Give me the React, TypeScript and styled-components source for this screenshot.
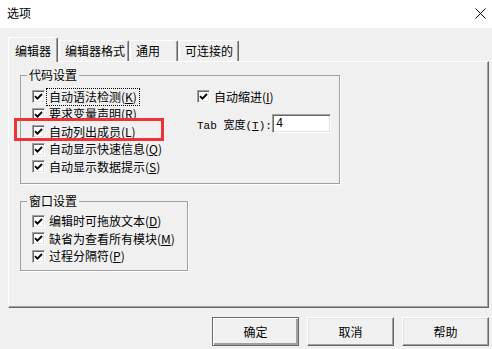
import React from "react";
import styled, { createGlobalStyle } from "styled-components";

const GlobalStyle = createGlobalStyle`
  html, body {
    margin: 0;
    padding: 0;
    background: #f0f0f0;
  }
  body {
    font-family: "Noto Sans CJK SC", "Liberation Sans", sans-serif;
    font-size: 12px;
    color: #000;
  }
`;

const Window = styled.div`
  position: relative;
  width: 492px;
  height: 349px;
  background: #f0f0f0;
  overflow: hidden;
`;

const TitleBar = styled.header`
  height: 28px;
  box-sizing: border-box;
  padding: 0 6px 2px 7px;
  background: #fff;
  display: flex;
  align-items: center;
  justify-content: space-between;
  font-size: 12px;
  line-height: 14px;
`;

const Body = styled.div`
  padding: 9px 3px 0 8px;
`;

const TabStrip = styled.div`
  display: flex;
  align-items: flex-end;
  height: 24px;
  position: relative;
  z-index: 1;
`;

const Tab = styled.div<{ $active?: boolean; $w: number }>`
  box-sizing: border-box;
  width: ${(p) => p.$w}px;
  height: ${(p) => (p.$active ? 25 : 21)}px;
  margin-bottom: ${(p) => (p.$active ? -1 : 0)}px;
  padding: ${(p) => (p.$active ? "2px 0 0 6px" : "0 0 0 5px")};
  display: flex;
  align-items: center;
  background: #f0f0f0;
  border-top: 1px solid #fff;
  border-left: 1px solid #fff;
  border-right: 1px solid #696969;
  box-shadow: inset -1px 0 0 #a0a0a0;
  border-radius: 2px 2px 0 0;
  line-height: 14px;
  white-space: nowrap;
  & + & {
    margin-left: ${(p) => (p.$w === 60 ? 1 : 0)}px;
  }
`;

const Panel = styled.section`
  box-sizing: border-box;
  width: 481px;
  height: 247px;
  padding: 13px 0 0 11px;
  border-top: 1px solid #fff;
  border-left: 1px solid #fff;
  border-right: 1px solid #696969;
  border-bottom: 1px solid #696969;
  box-shadow: inset -1px -1px 0 #a0a0a0;
`;

const GroupBox = styled.div<{ $w: number; $top: number; $pb: number }>`
  box-sizing: border-box;
  width: ${(p) => p.$w}px;
  margin-top: ${(p) => p.$top}px;
  padding: 0 0 ${(p) => p.$pb}px 11px;
  border: 1px solid #a0a0a0;
  box-shadow: 1px 1px 0 #fff;
`;

const Caption = styled.div<{ $gap: number }>`
  width: fit-content;
  height: 14px;
  margin: -8px 0 ${(p) => p.$gap}px -5px;
  padding: 0 2px;
  background: #f0f0f0;
  line-height: 14px;
`;

const Columns = styled.div`
  display: grid;
  grid-template-columns: 165px 1fr;
`;

const Stack = styled.div`
  display: flex;
  flex-direction: column;
`;

const Row = styled.div`
  height: 17.5px;
  display: flex;
  align-items: center;
`;

const Box = styled.span`
  box-sizing: border-box;
  width: 13px;
  height: 13px;
  flex: none;
  background: #fff;
  border: 1px solid;
  border-color: #a0a0a0 #fff #fff #a0a0a0;
  box-shadow: inset 1px 1px 0 #696969, inset -1px -1px 0 #e3e3e3;
  display: flex;
  align-items: center;
  justify-content: center;
`;

const Label = styled.span<{ $focus?: boolean }>`
  margin-left: 2px;
  padding: 1px 2px;
  line-height: 14px;
  white-space: nowrap;
  outline: ${(p) => (p.$focus ? "1px dotted #000" : "none")};
  outline-offset: 0;
`;

const TabRow = styled.div`
  margin-top: 8.5px;
  height: 19px;
  display: flex;
  align-items: center;
`;

const FieldLabel = styled.span`
  width: 75px;
  font-family: "Liberation Mono", "Noto Sans CJK SC", monospace;
  font-size: 11px;
  white-space: nowrap;
`;

const TextBox = styled.div`
  box-sizing: border-box;
  width: 59px;
  height: 19px;
  padding: 2px 0 0 3px;
  background: #fff;
  border: 1px solid;
  border-color: #a0a0a0 #fff #fff #a0a0a0;
  box-shadow: inset 1px 1px 0 #696969, inset -1px -1px 0 #e3e3e3;
  font-family: "Liberation Mono", monospace;
  font-size: 12px;
  line-height: 14px;
`;

const ButtonBar = styled.div`
  display: flex;
  justify-content: flex-end;
  gap: 8px;
  margin-top: 9px;
  padding-right: 0;
`;

const Button = styled.button<{ $default?: boolean }>`
  box-sizing: border-box;
  width: 87px;
  height: 29px;
  padding: 0;
  font-family: "Noto Sans CJK SC", sans-serif;
  font-size: 12px;
  color: #000;
  background: #f0f0f0;
  border: 1px solid;
  border-color: ${(p) =>
    p.$default ? "#696969" : "#fff #696969 #696969 #fff"};
  box-shadow: ${(p) =>
    p.$default
      ? "inset 1px 1px 0 #fff, inset -2px -2px 0 #a0a0a0"
      : "inset -1px -1px 0 #a0a0a0, inset 1px 1px 0 #e3e3e3"};
`;

const Highlight = styled.div`
  position: absolute;
  left: 14px;
  top: 118px;
  width: 150px;
  height: 23px;
  box-sizing: border-box;
  border: 3px solid #ec3338;
  pointer-events: none;
`;

const CloseIcon = () => (
  <svg width="11" height="11" viewBox="0 0 11 11">
    <path d="M0.5 0.5 L10.5 10.5 M10.5 0.5 L0.5 10.5" stroke="#000" strokeWidth="1" />
  </svg>
);

const Check = ({ label, focus }: { label: React.ReactNode; focus?: boolean }) => (
  <Row>
    <Box>
      <svg width="9" height="9" viewBox="0 0 9 9">
        <path d="M1 4.2 L3.4 6.6 L8 2" fill="none" stroke="#000" strokeWidth="1.9" />
      </svg>
    </Box>
    <Label $focus={focus}>{label}</Label>
  </Row>
);

const mn = (text: string, key: string) => (
  <>
    {text}(<u>{key}</u>)
  </>
);

export default function App() {
  return (
    <Window>
      <GlobalStyle />
      <TitleBar>
        <span>选项</span>
        <CloseIcon />
      </TitleBar>
      <Body>
        <TabStrip>
          <Tab $active $w={50}>编辑器</Tab>
          <Tab $w={70}>编辑器格式</Tab>
          <Tab $w={48}>通用</Tab>
          <Tab $w={60}>可连接的</Tab>
        </TabStrip>
        <Panel>
          <GroupBox $w={320} $top={0} $pb={7}>
            <Caption $gap={6}>代码设置</Caption>
            <Columns>
              <Stack>
                <Check focus label={mn("自动语法检测", "K")} />
                <Check label={mn("要求变量声明", "R")} />
                <Check label={mn("自动列出成员", "L")} />
                <Check label={mn("自动显示快速信息", "Q")} />
                <Check label={mn("自动显示数据提示", "S")} />
              </Stack>
              <Stack>
                <Check label={mn("自动缩进", "I")} />
                <TabRow>
                  <FieldLabel>
                    Tab 宽度(<u>T</u>):
                  </FieldLabel>
                  <TextBox>4</TextBox>
                </TabRow>
              </Stack>
            </Columns>
          </GroupBox>
          <GroupBox $w={168} $top={17} $pb={5}>
            <Caption $gap={5}>窗口设置</Caption>
            <Check label={mn("编辑时可拖放文本", "D")} />
            <Check label={mn("缺省为查看所有模块", "M")} />
            <Check label={mn("过程分隔符", "P")} />
          </GroupBox>
        </Panel>
        <ButtonBar>
          <Button $default>确定</Button>
          <Button>取消</Button>
          <Button>帮助</Button>
        </ButtonBar>
      </Body>
      <Highlight />
    </Window>
  );
}
